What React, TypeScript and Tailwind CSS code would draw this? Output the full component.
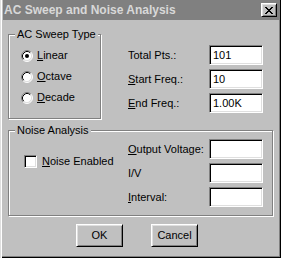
import React from "react";

const sunken =
  "border border-t-[#808080] border-l-[#808080] border-b-white border-r-white shadow-[inset_1px_1px_0_#000,inset_-1px_-1px_0_#dfdfdf]";
const raised =
  "border border-t-white border-l-white border-b-black border-r-black shadow-[inset_1px_1px_0_#dfdfdf,inset_-1px_-1px_0_#808080]";

function Group({
  className,
  label,
  children,
}: {
  className: string;
  label: React.ReactNode;
  children: React.ReactNode;
}) {
  return (
    <div
      className={
        "relative border border-[#808080] shadow-[inset_1px_1px_0_#fff,1px_1px_0_#fff] " +
        className
      }
    >
      <div className="absolute left-[6px] top-[-7px] px-[2px] bg-[#c0c0c0] whitespace-nowrap">
        {label}
      </div>
      {children}
    </div>
  );
}

function Radio({ checked }: { checked?: boolean }) {
  return (
    <svg width="12" height="12" viewBox="0 0 12 12" className="shrink-0">
      <circle cx="6" cy="6" r="5" fill="#fff" />
      <path d="M2.11 9.89 A5.5 5.5 0 0 1 9.89 2.11" fill="none" stroke="#808080" strokeWidth="1" />
      <path d="M9.89 2.11 A5.5 5.5 0 0 1 2.11 9.89" fill="none" stroke="#fff" strokeWidth="1" />
      <path d="M2.82 9.18 A4.5 4.5 0 0 1 9.18 2.82" fill="none" stroke="#000" strokeWidth="1" />
      <path d="M9.18 2.82 A4.5 4.5 0 0 1 2.82 9.18" fill="none" stroke="#dfdfdf" strokeWidth="1" />
      {checked && <circle cx="6" cy="6" r="2" fill="#000" />}
    </svg>
  );
}

function U({ children }: { children: React.ReactNode }) {
  return <span className="underline underline-offset-1">{children}</span>;
}

function Field({ value }: { value?: string }) {
  return (
    <div className={"w-[54px] h-[20px] bg-white flex items-center pl-[3px] " + sunken}>
      {value}
    </div>
  );
}

function RadioRow({ checked, children }: { checked?: boolean; children: React.ReactNode }) {
  return (
    <div className="h-[21px] flex items-center gap-[4px]">
      <Radio checked={checked} />
      <span>{children}</span>
    </div>
  );
}

export default function App() {
  return (
    <div className="w-[281px] h-[258px] bg-[#c0c0c0] pl-[3px] pr-[2px] shadow-[inset_1px_0_0_#dfdfdf,inset_2px_0_0_#fff,inset_-1px_-1px_0_#000,inset_-2px_-2px_0_#808080] font-['Liberation_Sans',Arial,sans-serif] text-[11px] leading-[13px] text-black overflow-hidden">
      <div className="h-[20px] bg-[#808080] flex items-center justify-between pl-[1px] pr-[2px]">
        <span className="text-[12px] font-bold text-[#d8d8d8] leading-[14px]">
          AC Sweep and Noise Analysis
        </span>
        <div className={"w-[16px] h-[14px] bg-[#c0c0c0] flex items-center justify-center " + raised}>
          <svg width="8" height="7" viewBox="0 0 8 7" shapeRendering="crispEdges">
            <rect x="0" y="0" width="2" height="1" />
            <rect x="6" y="0" width="2" height="1" />
            <rect x="1" y="1" width="2" height="1" />
            <rect x="5" y="1" width="2" height="1" />
            <rect x="2" y="2" width="4" height="1" />
            <rect x="3" y="3" width="2" height="1" />
            <rect x="2" y="4" width="4" height="1" />
            <rect x="1" y="5" width="2" height="1" />
            <rect x="5" y="5" width="2" height="1" />
            <rect x="0" y="6" width="2" height="1" />
            <rect x="6" y="6" width="2" height="1" />
          </svg>
        </div>
      </div>

      <div className="pl-[5px] pt-[14px]">
        <div className="flex">
          <Group className="w-[93px] h-[85px]" label="AC Sweep Type">
            <div className="pl-[12px] pt-[10px] flex flex-col">
              <RadioRow checked>
                <U>L</U>inear
              </RadioRow>
              <RadioRow>
                <U>O</U>ctave
              </RadioRow>
              <RadioRow>
                <U>D</U>ecade
              </RadioRow>
            </div>
          </Group>
          <div className="ml-[27px] mt-[11px] grid grid-cols-[81px_54px] gap-y-[4px] items-center self-start">
            <span>Total Pts.:</span>
            <Field value="101" />
            <span>
              <U>S</U>tart Freq.:
            </span>
            <Field value="10" />
            <span>
              <U>E</U>nd Freq.:
            </span>
            <Field value="1.00K" />
          </div>
        </div>

        <Group className="mt-[11px] w-[265px] h-[86px]" label="Noise Analysis">
          <div className="flex">
            <div className="w-[119px] pl-[15px] pt-[24px]">
              <div className="flex items-center gap-[5px]">
                <div className={"w-[13px] h-[13px] bg-white shrink-0 " + sunken} />
                <span>
                  <U>N</U>oise Enabled
                </span>
              </div>
            </div>
            <div className="pt-[8px] grid grid-cols-[81px_54px] gap-y-[4px] items-center">
              <span>
                <U>O</U>utput Voltage:
              </span>
              <Field />
              <span>I/V</span>
              <Field />
              <span>
                <U>I</U>nterval:
              </span>
              <Field />
            </div>
          </div>
        </Group>

        <div className="flex mt-[8px] pl-[68px] gap-[28px]">
          <div className={"w-[47px] h-[23px] bg-[#c0c0c0] flex items-center justify-center " + raised}>
            OK
          </div>
          <div className={"w-[47px] h-[23px] bg-[#c0c0c0] flex items-center justify-center " + raised}>
            Cancel
          </div>
        </div>
      </div>
    </div>
  );
}
